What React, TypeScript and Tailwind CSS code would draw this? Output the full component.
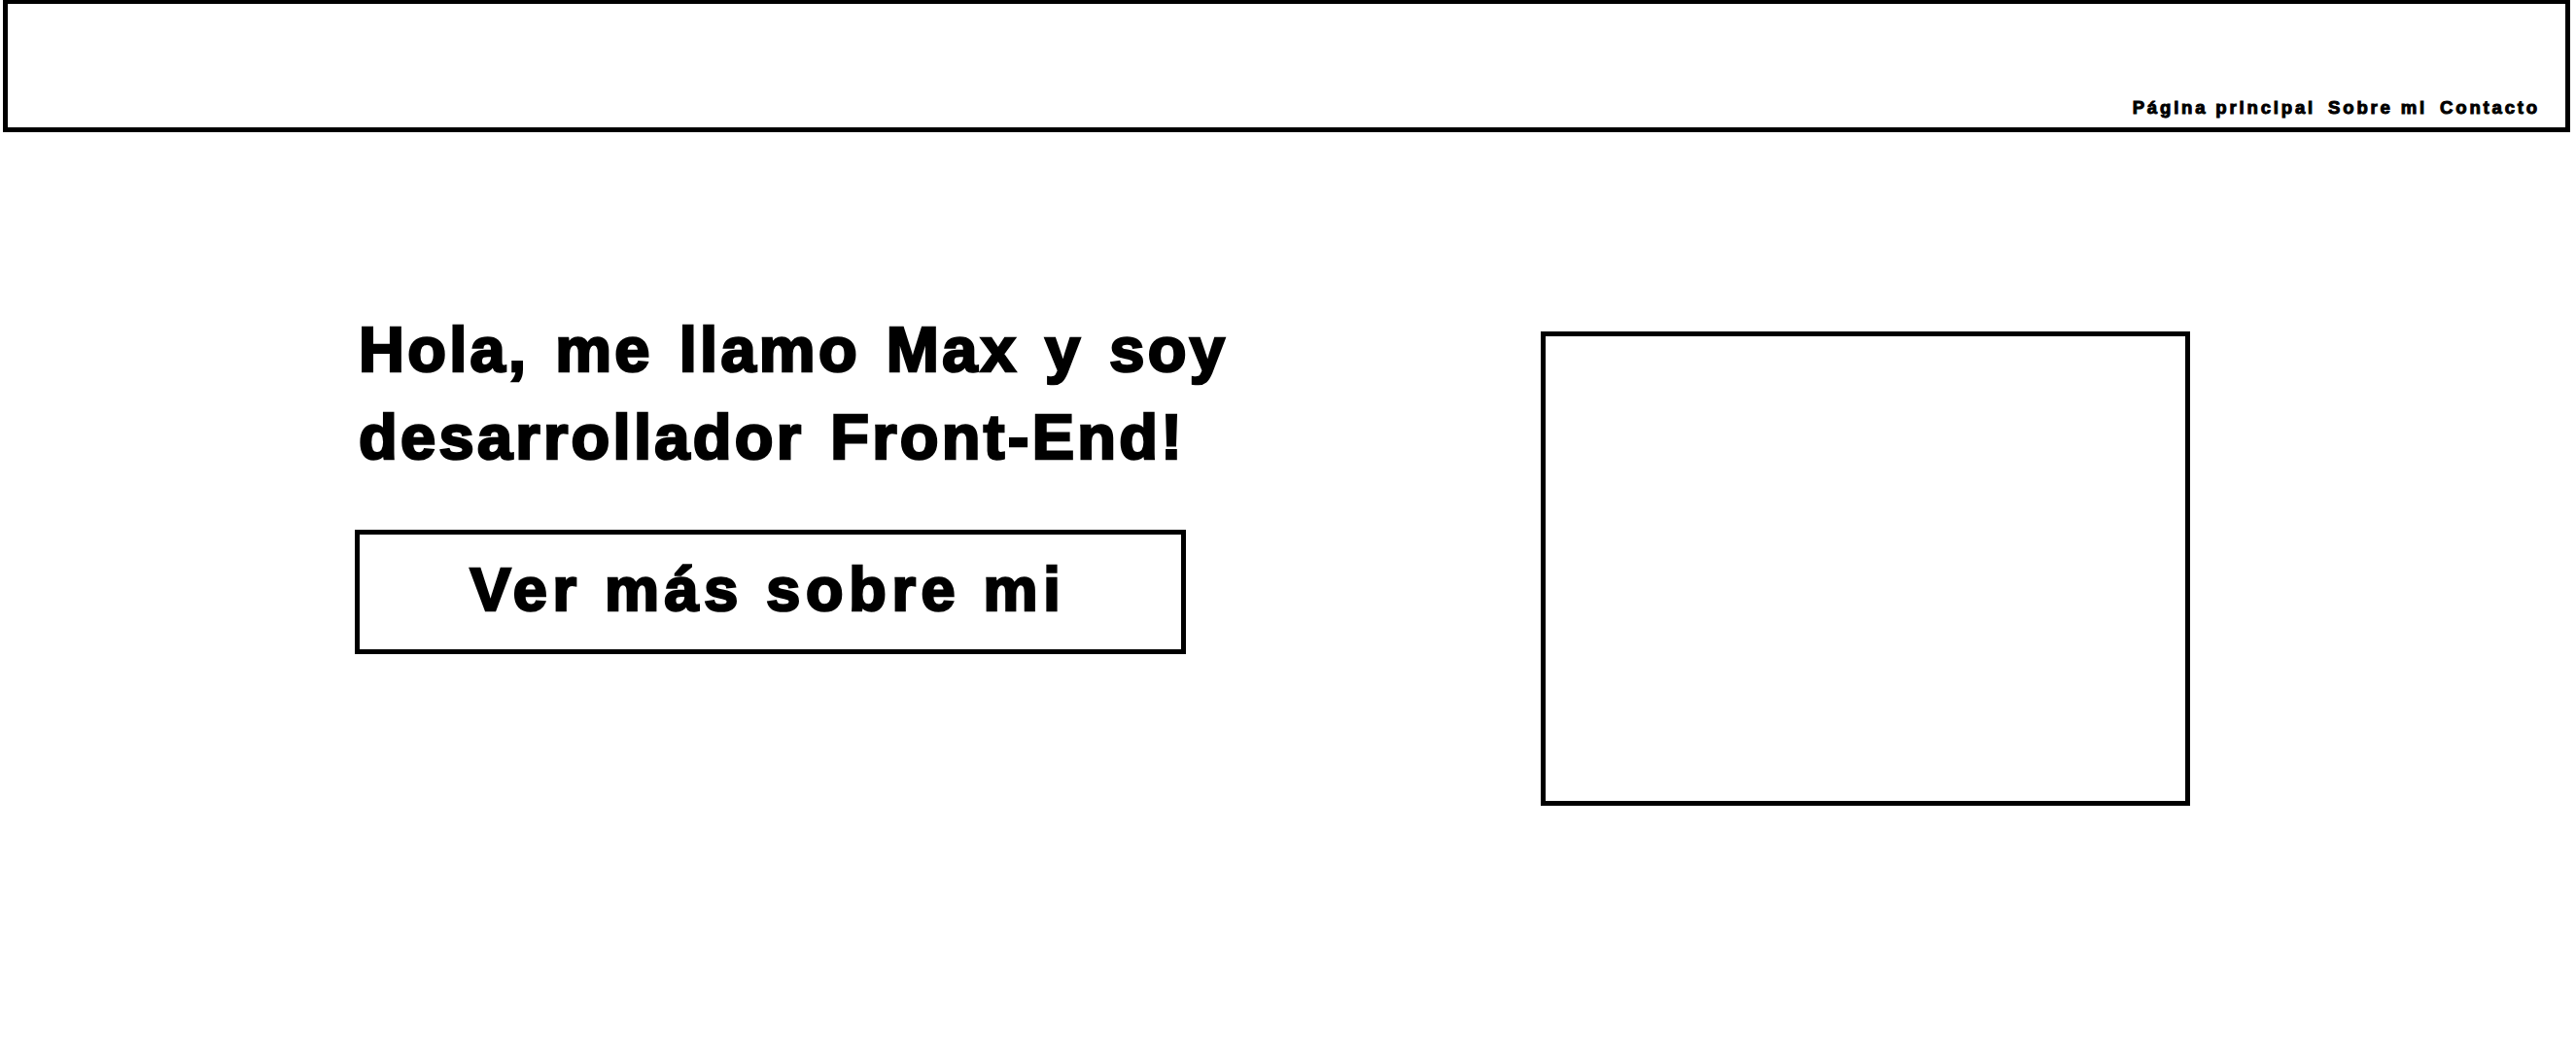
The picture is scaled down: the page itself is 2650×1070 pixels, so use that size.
const NAV_LINKS = ["Página principal", "Sobre mi", "Contacto"];

function Header() {
  return (
    <header className="ml-[3px] w-[2641px] h-[136px] border-x-[5px] border-b-[5px] border-t-4 border-black flex items-end justify-end pr-[26px] pb-[6px]">
      <nav className="flex gap-[13px]">
        {NAV_LINKS.map((link) => (
          <a
            key={link}
            href="#"
            className="text-[18.6px] font-bold tracking-[2.8px] text-black [-webkit-text-stroke:1px_black]"
          >
            {link}
          </a>
        ))}
      </nav>
    </header>
  );
}

function Hero() {
  return (
    <main className="flex pt-[179px] pl-[365px]">
      <section className="w-[1220px]">
        <h1 className="ml-[4px] w-[930px] text-[65px] leading-[90px] font-bold tracking-[3.3px] [word-spacing:5.5px] text-black [-webkit-text-stroke:2.6px_black]">
          Hola, me llamo Max y soy desarrollador Front-End!
        </h1>
        <button className="mt-[50px] w-[855px] h-[128px] border-[5px] border-black flex items-center justify-center pb-[6px] pr-[5px] text-[63px] leading-none font-bold tracking-[5.7px] text-black [-webkit-text-stroke:2.6px_black]">
          Ver más sobre mi
        </button>
      </section>
      <div className="mt-[26px] w-[668px] h-[488px] border-[5px] border-black" />
    </main>
  );
}

export default function App() {
  return (
    <div className="min-h-[1070px] bg-white font-['Liberation_Sans',Arial,sans-serif]">
      <Header />
      <Hero />
    </div>
  );
}
